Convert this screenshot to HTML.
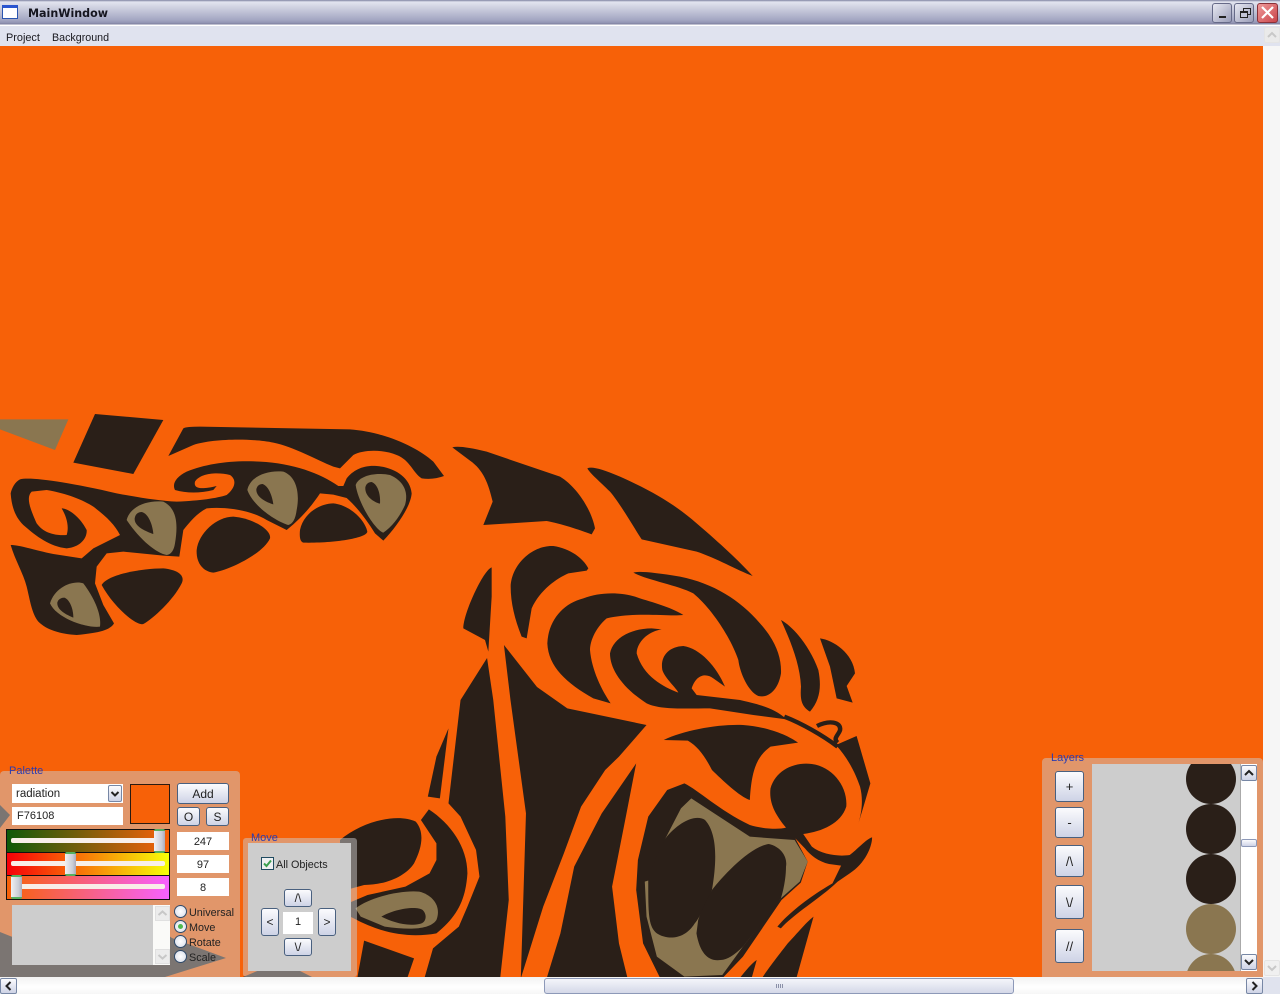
<!DOCTYPE html>
<html><head><meta charset="utf-8"><title>MainWindow</title>
<style>
html,body{margin:0;padding:0;width:1280px;height:994px;overflow:hidden;background:#F76108;font-family:"Liberation Sans",sans-serif;font-size:10.8px;color:#222}
div,span{position:absolute;box-sizing:border-box}
.btn{background:linear-gradient(#fbfbfd,#ced3e6);border:1px solid #49607f;border-radius:3px;text-align:center;color:#222;font-size:12px}
.inp{background:#fff;text-align:center;font-size:11px;line-height:20px;color:#222}
.t{white-space:nowrap}
.grad{border:1px solid #111}
.gr{height:5px;background:#f8efe8;border-radius:2px}
.h{width:11px;height:24px;border-radius:2px;background:linear-gradient(90deg,#f0f0f2,#c9ccd6 70%,#aab);border-top:2px solid #55b060;border-bottom:2px solid #55b060}
.r{width:13px;height:13px;border-radius:50%;border:1.5px solid #2f4a6a;background:radial-gradient(#fff,#d5dbe8)}
.leg{color:#2b3cb0;font-size:11px;white-space:nowrap}
</style></head><body>
<svg width="1280" height="994" style="position:absolute;left:0;top:0" viewBox="0 0 1280 994">
<rect width="1280" height="994" fill="#F76108"/>
<g fill="#2A1F18">
<g transform="translate(0 410) scale(.33333)">
<path fill="#8A7650" d="M0,28L205,28L165,120L0,58Z"/>
<path d="M285,12L490,30L400,192L220,158Z"/>
<path d="M505,138L550,55Q560,50 600,50L1050,58C1150,65 1250,110 1300,155L1332,198Q1300,210 1265,205C1240,190 1230,150 1190,135C1150,118 1090,118 1060,135L1020,175L1000,170C950,150 880,110 820,98C760,85 640,85 580,105Z"/>
<path d="M60,208C90,200 200,215 350,250C430,265 480,272 530,275C600,272 650,265 680,255C705,235 712,210 690,195C650,185 600,190 585,215C580,235 600,240 650,228L640,240C600,250 560,250 525,240C515,220 530,200 560,185C620,160 700,150 780,155C880,160 960,190 1015,228L1030,228L1040,205C1060,180 1090,165 1130,168C1180,172 1230,200 1235,250C1232,290 1190,350 1150,392L1125,370C1100,330 1070,290 1040,264L1000,254L960,250C940,280 910,320 860,360L800,330C750,300 680,290 620,295C590,310 570,335 550,360L538,440L490,437L370,425L320,430L290,470L285,520L310,585L342,640C330,660 300,668 230,675C180,672 140,660 115,635C95,610 90,570 80,530C70,490 45,450 32,405C60,405 100,420 160,432L245,445L280,415L360,375C345,345 320,320 280,290C250,270 200,250 140,240L95,245C80,260 85,285 110,340C125,360 150,378 200,375C208,350 200,320 185,295C205,295 240,320 260,360C262,385 240,412 200,415C150,410 110,380 70,345C45,320 35,290 32,250C35,235 45,215 60,208Z"/>
<path d="M305,525C320,495 420,475 490,475C540,480 555,500 545,520C520,570 460,625 430,642C410,650 340,590 305,525Z"/>
<path d="M590,420C595,370 650,320 700,320C760,325 815,360 810,385C790,430 690,480 640,488C610,485 588,460 590,420Z"/>
<path d="M900,360C910,310 960,280 1000,280C1050,285 1095,330 1102,365C1100,385 1000,400 910,398C900,395 898,380 900,360Z"/>
<g fill="#8A7650">
<path d="M380,330C390,290 440,270 490,275C530,295 535,340 525,400Q520,432 500,435C470,430 420,390 380,330Z"/>
<path d="M742,240C750,200 800,180 850,185C890,200 900,250 890,300Q885,340 865,345C830,335 760,290 742,240Z"/>
<path d="M1067,225C1075,200 1120,185 1170,195C1215,215 1225,250 1215,285Q1190,340 1150,368C1125,360 1075,280 1067,225Z"/>
<path d="M150,580C165,530 220,510 250,520C280,560 305,610 300,650C260,655 170,625 150,580Z"/>
</g>
<path d="M425,306C445,310 458,345 460,372C440,365 402,350 404,325C406,312 415,306 425,306Z"/>
<path d="M788,222C805,228 816,255 820,283C800,277 768,262 769,238C771,228 778,222 788,222Z"/>
<path d="M1115,216C1132,222 1142,250 1140,281C1120,276 1094,258 1096,232C1098,222 1106,216 1115,216Z"/>
<path d="M193,563C208,568 220,595 220,623C200,615 170,600 172,578C174,568 184,563 193,563Z"/>
</g>
<g transform="translate(420 440) scale(.33333)">
<path d="M97,22Q120,15 200,35L420,110C470,140 515,210 525,265L515,283C480,270 420,250 380,243L190,255L218,185C205,130 190,90 150,62Z"/>
<path d="M502,85Q520,75 600,110C700,155 760,190 830,250C900,310 960,365 998,408C950,390 890,355 830,335L665,298C640,260 600,190 570,155C540,125 510,100 502,85Z"/>
<path d="M215,382L215,470L205,635L195,600L130,565C130,520 190,390 215,382Z"/>
<path d="M272,440C275,370 340,315 400,318C450,325 490,355 505,385L500,392L445,400C410,415 360,450 335,505L320,595L305,590C285,540 272,490 272,440Z"/>
<path d="M640,398Q660,390 780,410C880,430 960,480 1020,550C1065,600 1085,650 1083,700C1075,750 1045,775 1015,768C985,755 960,700 955,660C935,600 880,510 820,460C770,435 680,420 640,398Z"/>
<path d="M790,525C740,530 650,515 560,535C530,560 510,600 510,630C515,690 545,750 572,790L520,775C440,730 385,680 382,610C385,540 430,490 490,475C540,455 610,455 660,475C710,490 760,505 790,525Z"/>
<path d="M725,568L695,565C640,565 580,590 570,640C570,690 610,745 680,790C720,810 800,805 870,805L1000,825L1100,838C1060,800 1000,790 960,780L830,765L815,745C830,700 860,700 880,715L915,740C890,680 840,625 790,618C745,620 720,650 727,690C735,715 770,745 775,758C730,740 670,710 650,640C650,610 680,575 725,568Z"/>
<path d="M1083,540C1120,560 1170,620 1195,690C1205,740 1200,780 1170,815C1145,800 1140,780 1143,740C1140,670 1110,600 1083,540Z"/>
<path d="M1200,595C1240,600 1300,640 1305,700L1280,738L1298,788L1250,775L1230,680Z"/>
</g>
<g transform="translate(340 700) scale(.3444 .33333)">
<path d="M427,-126L445,0L480,350L490,600L465,835L245,835L270,745L345,680L370,620L405,530L395,450L350,350L315,310L350,0Z"/>
<path d="M476,-165L572,-39L660,25L890,75L810,170L770,210L700,320L650,460L590,620L525,835L540,340L495,0Z"/>
<path d="M860,190L830,350L790,560L810,730L835,835L600,835L640,700L680,500L760,340Z"/>
<path d="M315,85L290,295L255,290L280,170Z"/>
<path d="M0,420C70,360 170,340 220,365C245,395 240,440 215,490C190,530 130,555 70,555L0,575Z"/>
<path d="M258,328C320,370 370,440 370,520C365,600 340,650 280,700C200,715 120,700 40,655L0,635L0,620L80,585L190,560L260,520L280,480L280,430L235,360Z"/>
<path fill="#8A7650" d="M45,625C90,590 180,570 230,575C270,585 295,620 280,660C260,690 200,690 130,680L60,650Z"/>
<path d="M120,650C150,630 220,615 240,630C255,645 250,670 230,672C190,680 150,665 120,650Z"/>
<path d="M70,722L215,775L195,835L50,835Z"/>
<path d="M940,120C1000,90 1100,72 1170,75C1240,80 1300,105 1330,128L1250,140C1210,170 1195,210 1190,300C1160,290 1110,240 1080,210C1060,170 1040,140 1010,122Z"/>
<path d="M1000,250C1040,270 1100,330 1190,375C1220,385 1270,390 1295,383C1265,345 1245,310 1250,265C1265,210 1320,185 1370,192C1430,200 1475,260 1470,320C1455,370 1400,395 1345,402L1370,440C1400,465 1450,470 1480,465C1500,450 1530,415 1545,412C1545,440 1525,490 1480,520L1445,545C1400,590 1320,640 1280,685L1270,680C1310,630 1380,580 1430,550L1455,497L1420,492C1390,485 1365,465 1350,445L1322,415L1358,485L1338,548L1282,600L1170,770L1110,835L930,835L880,730L860,570L865,480L895,350L950,270Z"/>
<path fill="#8A7650" d="M1020,295L1190,410L1320,420L1358,485L1335,545L1280,595L1170,740L1110,825L1000,830L920,770L890,650L885,545L900,540L945,415L990,325Z"/>
<path d="M945,415C980,370 1030,340 1060,360C1095,400 1095,480 1080,570C1060,620 1040,660 1030,670C1000,720 950,720 920,700C895,680 895,640 895,540C910,490 925,450 945,415Z"/>
<path d="M1080,570C1110,530 1190,440 1245,432C1280,440 1300,470 1295,500C1295,540 1285,580 1280,595C1250,640 1200,700 1170,740C1145,765 1125,780 1105,780C1070,785 1045,760 1035,700L1040,660C1050,630 1065,600 1080,570Z"/>
<path d="M1375,650L1325,835L1225,835C1240,810 1270,770 1300,730C1320,710 1350,670 1375,650Z"/>
<path d="M1210,780L1195,835L1160,835C1180,810 1195,790 1210,780Z"/>
<path d="M1440,135L1500,108L1540,250L1520,320L1503,378C1515,340 1520,300 1510,260C1500,230 1480,180 1440,135Z"/>
<path fill="none" stroke="#2A1F18" stroke-width="13" d="M1290,50C1340,70 1400,105 1445,140"/>
<path fill="none" stroke="#2A1F18" stroke-width="13" d="M1385,78C1420,60 1455,65 1452,90C1448,105 1430,115 1445,128"/>
</g>
<!-- shapes beneath palette and move panels -->
<path d="M0,805L10,815L0,828Z"/>
<path d="M0,932L50,952L90,962L117,955L153,925L172,938L226,958L165,977L0,977Z"/>
<path d="M243,977L262,969L300,971L312,977Z"/>
</g>
</svg>

<!-- Title bar -->
<div style="left:0;top:0;width:1280px;height:26px;background:linear-gradient(#7f83a2 0,#e2e4ef 2px,#d4d6e4 6px,#a3a6c2 20px,#9093b2 23px,#7d7f9e 24px,#fff 25px)"></div>
<div style="left:2px;top:5px;width:16px;height:14px;background:#fff;border:1px solid #2a55b0;border-top:3px solid #2a55d0"></div>
<div class="t" style="left:28px;top:6px;font:bold 11.1px/15px 'DejaVu Sans',sans-serif;color:#15151f">MainWindow</div>
<div style="left:1212px;top:3px;width:20px;height:20px;border-radius:3px;border:1px solid #666a88;background:linear-gradient(135deg,#e8e9f2,#9a9db8)"><div style="left:6px;top:12px;width:7px;height:2px;background:#222"></div></div>
<div style="left:1234px;top:3px;width:20px;height:20px;border-radius:3px;border:1px solid #666a88;background:linear-gradient(135deg,#e8e9f2,#9a9db8)"><div style="left:8px;top:4px;width:8px;height:7px;border:1px solid #222"></div><div style="left:5px;top:7px;width:8px;height:7px;border:1px solid #222;border-top-width:2px;background:#c4c6d8"></div></div>
<div style="left:1257px;top:3px;width:21px;height:20px;border-radius:3px;border:1px solid #8a3038;background:linear-gradient(135deg,#ef9a9a,#c9444a)"><svg width="19" height="18" style="position:absolute;left:0;top:0"><path d="M4 3L15 14M15 3L4 14" stroke="#fff" stroke-width="2.2"/></svg></div>

<!-- Menu bar -->
<div style="left:0;top:26px;width:1280px;height:20px;background:#e0e3ef"></div>
<div class="t" style="left:6px;top:31px;font-size:10.9px;line-height:14px;color:#1a1a20">Project</div>
<div class="t" style="left:52px;top:31px;font-size:10.7px;line-height:14px;color:#1a1a20">Background</div>

<!-- Right scrollbar -->
<div style="left:1263px;top:46px;width:17px;height:931px;background:#f6f6f6"></div>
<div style="left:1264px;top:27px;width:16px;height:16px;background:#eaeaea;border:1px solid #e4e4e4;border-radius:2px"><svg width="14" height="14" style="position:absolute"><path d="M3 9L7 5L11 9" fill="none" stroke="#c8c8c8" stroke-width="2"/></svg></div>
<div style="left:1264px;top:960px;width:16px;height:16px;background:#f0f0f0;border:1px solid #e4e4e4;border-radius:2px"><svg width="14" height="14" style="position:absolute"><path d="M3 5L7 9L11 5" fill="none" stroke="#c8c8c8" stroke-width="2"/></svg></div>

<!-- Bottom scrollbar -->
<div style="left:0;top:977px;width:1263px;height:17px;background:linear-gradient(#f2f2f2,#fff 60%,#f6f6f6)"></div>
<div style="left:1263px;top:977px;width:17px;height:17px;background:#e0e3ee"></div>
<div class="btn" style="left:0;top:978px;width:17px;height:16px;border-color:#7787a5;border-radius:2px"><svg width="15" height="14" style="position:absolute;left:0;top:0"><path d="M9.5 3L5.5 7L9.5 11" fill="none" stroke="#222" stroke-width="2"/></svg></div>
<div class="btn" style="left:1246px;top:978px;width:17px;height:16px;border-color:#7787a5;border-radius:2px"><svg width="15" height="14" style="position:absolute;left:0;top:0"><path d="M5.5 3L9.5 7L5.5 11" fill="none" stroke="#222" stroke-width="2"/></svg></div>
<div style="left:544px;top:978px;width:470px;height:16px;border:1px solid #8d99b8;border-radius:3px;background:linear-gradient(#f4f5fa,#d4d8e8)"></div>
<div style="left:776px;top:984px;width:7px;height:4px;background:repeating-linear-gradient(90deg,#8a90a8 0,#8a90a8 1px,transparent 1px,transparent 2px)"></div>

<!-- Palette -->
<div class="leg" style="left:9px;top:765px;z-index:3">Palette</div>
<div style="left:0;top:771px;width:240px;height:206px;background:rgba(204,204,204,.5);border-radius:4px 4px 0 0"></div>
<div class="inp t" style="left:12px;top:784px;width:111px;height:19px;text-align:left;padding-left:4px;font-size:11.5px">radiation</div>
<div class="btn" style="left:108px;top:785px;width:14px;height:17px;border-radius:2px;border-color:#7787a5"><svg width="12" height="15" style="position:absolute;left:0;top:0"><path d="M2.5 6L6 9.5L9.5 6" fill="none" stroke="#222" stroke-width="2"/></svg></div>
<div class="inp t" style="left:12px;top:807px;width:111px;height:18px;text-align:left;padding-left:5px;line-height:19px">F76108</div>
<div style="left:130px;top:784px;width:40px;height:40px;background:#F76108;border:1px solid #2a1a10"></div>
<div class="btn" style="left:177px;top:783px;width:52px;height:21px;line-height:20px">Add</div>
<div class="btn" style="left:177px;top:807px;width:23px;height:19px;line-height:18px">O</div>
<div class="btn" style="left:206px;top:807px;width:23px;height:19px;line-height:18px">S</div>
<div class="inp" style="left:177px;top:832px;width:52px;height:18px">247</div>
<div class="inp" style="left:177px;top:855px;width:52px;height:18px">97</div>
<div class="inp" style="left:177px;top:878px;width:52px;height:18px">8</div>
<div class="grad" style="left:6px;top:829px;width:164px;height:24px;background:linear-gradient(90deg,rgb(15,90,8),rgb(247,97,8))"></div>
<div class="grad" style="left:6px;top:852px;width:164px;height:24px;background:linear-gradient(90deg,rgb(247,0,8),rgb(247,255,8))"></div>
<div class="grad" style="left:6px;top:875px;width:164px;height:25px;background:linear-gradient(90deg,rgb(247,97,8),rgb(247,97,255))"></div>
<div class="gr" style="left:11px;top:838px;width:150px"></div>
<div class="gr" style="left:11px;top:861px;width:154px"></div>
<div class="gr" style="left:15px;top:884px;width:150px"></div>
<div class="h" style="left:154px;top:829px"></div>
<div class="h" style="left:65px;top:852px"></div>
<div class="h" style="left:11px;top:875px"></div>
<div style="left:12px;top:905px;width:141px;height:60px;background:#cdcdcd"></div>
<div style="left:153px;top:905px;width:17px;height:60px;background:#fafaf8"></div>
<div style="left:155px;top:906px;width:15px;height:15px;background:#ececec;border:1px solid #e0e0e0"><svg width="13" height="13" style="position:absolute"><path d="M2.5 8L6.5 4.5L10.5 8" fill="none" stroke="#c8c8c8" stroke-width="2"/></svg></div>
<div style="left:155px;top:949px;width:15px;height:15px;background:#ececec;border:1px solid #e0e0e0"><svg width="13" height="13" style="position:absolute"><path d="M2.5 5L6.5 8.5L10.5 5" fill="none" stroke="#c8c8c8" stroke-width="2"/></svg></div>
<div class="r" style="left:174px;top:905px"></div>
<div class="r" style="left:174px;top:920px"><div style="left:3px;top:3px;width:5px;height:5px;border-radius:50%;background:#4fb84f"></div></div>
<div class="r" style="left:174px;top:935px"></div>
<div class="r" style="left:174px;top:950px"></div>
<div class="t" style="left:189px;top:906px;line-height:14px">Universal</div>
<div class="t" style="left:189px;top:921px;line-height:14px">Move</div>
<div class="t" style="left:189px;top:936px;line-height:14px">Rotate</div>
<div class="t" style="left:189px;top:951px;line-height:14px">Scale</div>

<!-- Move -->
<div style="left:243px;top:838px;width:114px;height:139px;background:rgba(204,204,204,.5);border-radius:3px"></div>
<div style="left:248px;top:843px;width:103px;height:128px;background:#cdcdcd"></div>
<div class="leg" style="left:251px;top:832px;z-index:3">Move</div>
<div style="left:261px;top:857px;width:13px;height:13px;background:#eef0f2;border:1px solid #1f4a60"><svg width="11" height="11" style="position:absolute;left:0;top:0"><path d="M2 5.5L4.5 8L9 2.5" fill="none" stroke="#3aa050" stroke-width="2"/></svg></div>
<div class="t" style="left:276px;top:858px;line-height:14px">All Objects</div>
<div class="btn" style="left:284px;top:889px;width:28px;height:18px;line-height:17px">/\</div>
<div class="btn" style="left:261px;top:908px;width:18px;height:28px;line-height:27px">&lt;</div>
<div class="inp" style="left:283px;top:912px;width:30px;height:22px;line-height:21px">1</div>
<div class="btn" style="left:318px;top:908px;width:18px;height:28px;line-height:27px">&gt;</div>
<div class="btn" style="left:284px;top:938px;width:28px;height:18px;line-height:17px">\/</div>

<!-- Layers -->
<div style="left:1042px;top:758px;width:221px;height:219px;background:rgba(204,204,204,.5);border-radius:4px 4px 0 0"></div>
<div class="leg" style="left:1051px;top:752px;z-index:3">Layers</div>
<div style="left:1092px;top:764px;width:148px;height:207px;background:#cdcdcd;overflow:hidden">
<svg width="148" height="207" style="position:absolute;left:0;top:0">
<circle cx="119" cy="15" r="25" fill="#2A1F18"/>
<circle cx="119" cy="65" r="25" fill="#2A1F18"/>
<circle cx="119" cy="115" r="25" fill="#2A1F18"/>
<circle cx="119" cy="165" r="25" fill="#8A7650"/>
<circle cx="119" cy="215" r="25" fill="#8A7650"/>
</svg></div>
<div style="left:1240px;top:764px;width:17px;height:207px;background:#fff;border-left:1px solid #aaa"></div>
<div class="btn" style="left:1241px;top:765px;width:16px;height:16px;border-radius:2px;border-color:#7787a5"><svg width="14" height="14" style="position:absolute;left:0;top:0"><path d="M3 9L7 5L11 9" fill="none" stroke="#222" stroke-width="2"/></svg></div>
<div class="btn" style="left:1241px;top:954px;width:16px;height:16px;border-radius:2px;border-color:#7787a5"><svg width="14" height="14" style="position:absolute;left:0;top:0"><path d="M3 5L7 9L11 5" fill="none" stroke="#222" stroke-width="2"/></svg></div>
<div class="btn" style="left:1241px;top:839px;width:16px;height:8px;border-radius:2px;border-color:#8d99b8"></div>
<div class="btn" style="left:1055px;top:771px;width:29px;height:31px;line-height:30px;font-size:13px">+</div>
<div class="btn" style="left:1055px;top:807px;width:29px;height:31px;line-height:30px;font-size:13px">-</div>
<div class="btn" style="left:1055px;top:845px;width:29px;height:32px;line-height:31px;font-size:13px">/\</div>
<div class="btn" style="left:1055px;top:885px;width:29px;height:34px;line-height:33px;font-size:13px">\/</div>
<div class="btn" style="left:1055px;top:929px;width:29px;height:34px;line-height:33px;font-size:13px">//</div>
</body></html>
